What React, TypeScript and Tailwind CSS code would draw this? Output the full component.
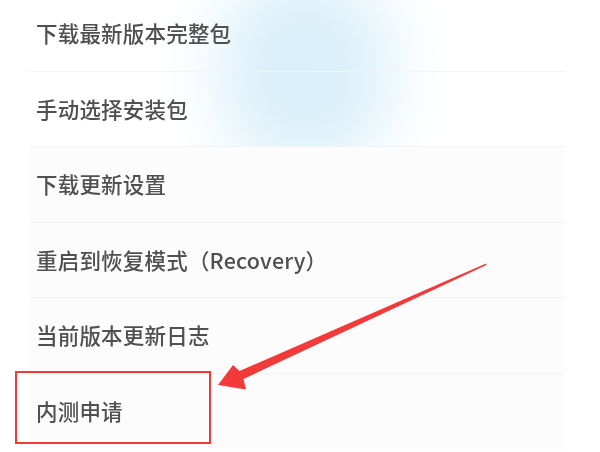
const ITEMS = [
  '下载最新版本完整包',
  '手动选择安装包',
  '下载更新设置',
  '重启到恢复模式（Recovery）',
  '当前版本更新日志',
  '内测申请',
];

export default function App() {
  return (
    <div
      className="relative w-[600px] h-[452px] overflow-hidden bg-white"
      style={{ fontFamily: '"Noto Sans CJK SC", "Noto Sans", sans-serif' }}
    >
      {/* blurred blue glow behind the list */}
      <div className="absolute left-[220px] top-[-30px] w-[170px] h-[200px] rounded-full bg-[#d9eff9] blur-[32px]" />

      <div className="relative ml-[30px] mt-[-4px] w-[535px] flex flex-col">
        {ITEMS.map((label, i) => (
          <div
            key={label}
            className={`h-[75.5px] flex items-center pl-[6px] ${
              i < ITEMS.length - 1 ? 'border-b border-[#f3f3f3]' : ''
            } ${i >= 2 ? 'bg-[#fcfcfc]' : ''}`}
          >
            <span className="text-[21.5px] font-medium text-[#505050] tracking-[0.2px] blur-[0.4px]">{label}</span>
          </div>
        ))}
      </div>

      {/* annotation: red box */}
      <div className="absolute left-[15px] top-[371px] w-[196px] h-[73px] border-2 border-[#f03a3a]" />

      {/* annotation: arrow */}
      <svg className="absolute left-0 top-0" width="600" height="452" viewBox="0 0 600 452">
        <polygon
          points="218,385 233,365 239.5,371 486,263.5 486.5,265 243.5,379 246,389.5"
          fill="#f23a3a"
        />
      </svg>
    </div>
  );
}
